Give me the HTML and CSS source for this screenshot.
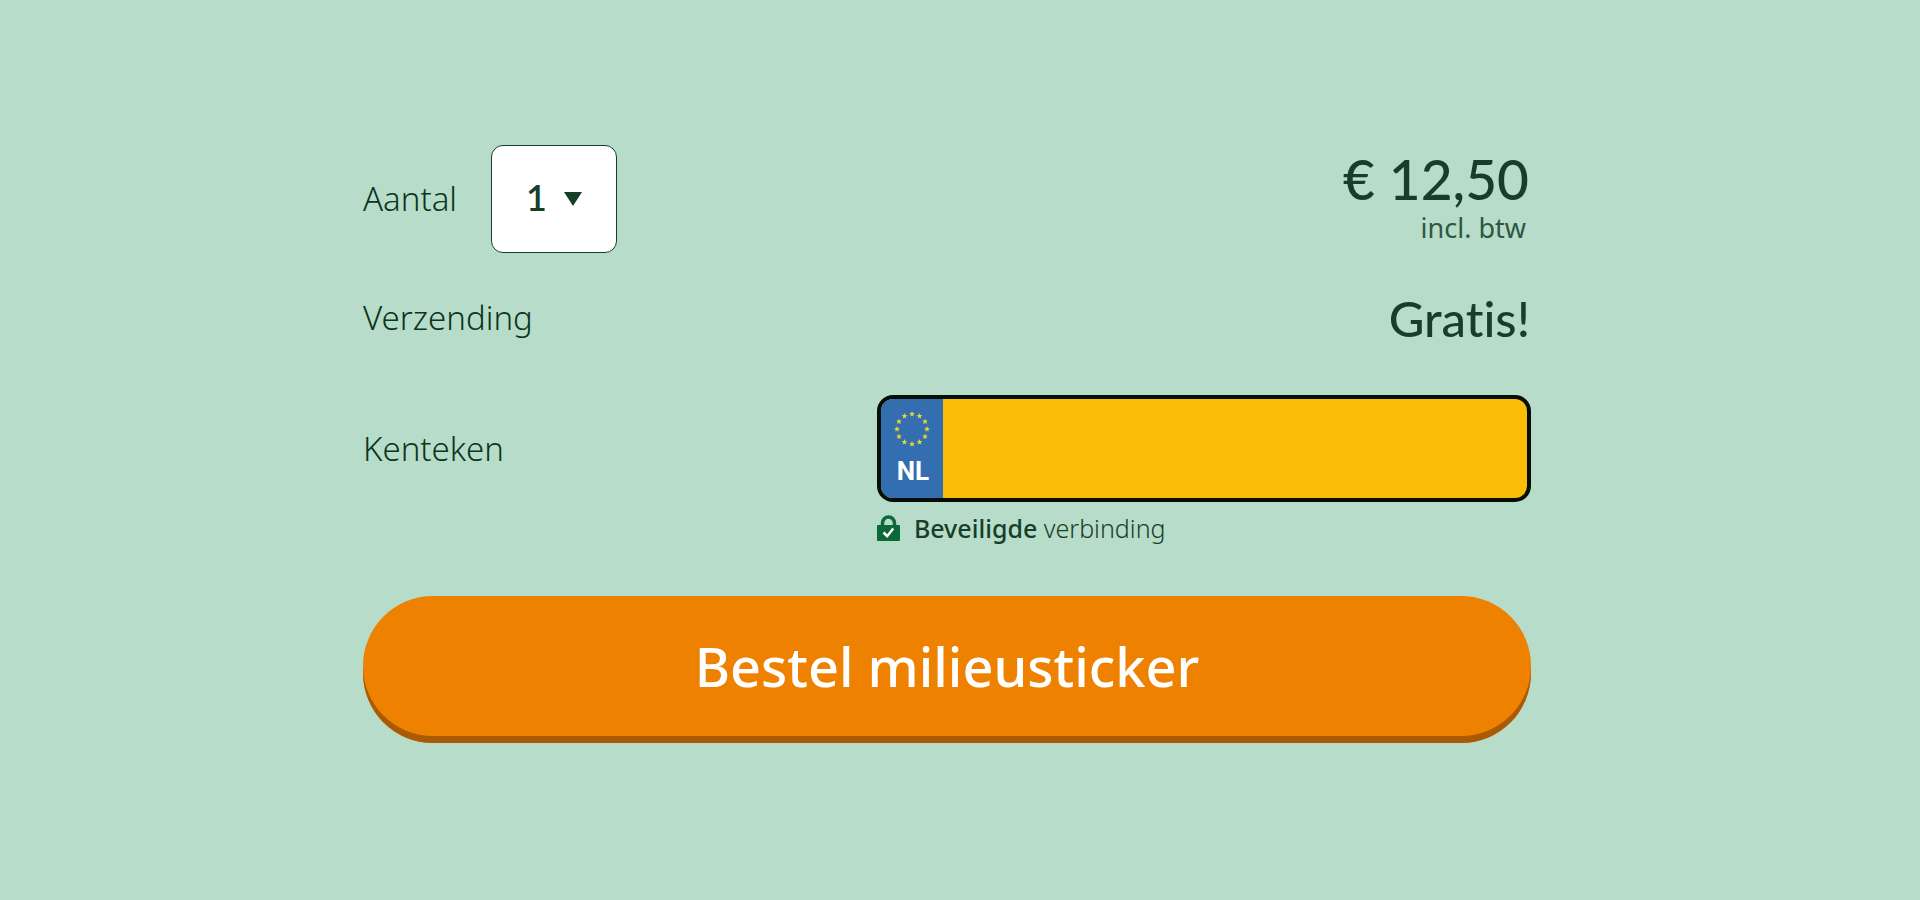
FILE: index.html
```html
<!DOCTYPE html>
<html lang="nl">
<head>
<meta charset="utf-8">
<meta name="viewport" content="width=device-width, initial-scale=1">
<title>Bestel milieusticker</title>
<link rel="stylesheet" href="styles.css">
</head>
<body>
<form class="order">
  <div class="row row-amount">
    <div class="amount">
      <label class="label" for="aantal">Aantal</label>
      <div class="select-box">
        <select class="select" id="aantal">
          <option>1</option><option>2</option><option>3</option><option>4</option>
        </select>
        <svg class="arrow" viewBox="0 0 18 14" aria-hidden="true"><path d="M0 0h18L9 14z"/></svg>
      </div>
    </div>
    <div class="price">
      <strong class="price-value">€ 12,50</strong>
      <span class="price-note">incl. btw</span>
    </div>
  </div>
  <div class="row row-shipping">
    <span class="label">Verzending</span>
    <strong class="free">Gratis!</strong>
  </div>
  <div class="row row-plate">
    <label class="label" for="kenteken">Kenteken</label>
    <div class="plate">
      <div class="country">
        <svg class="stars" viewBox="-18 -18 36 36" aria-hidden="true">
          <defs><path id="star" d="M0-2.9.8-.9 2.8-.9 1.3.5 1.8 2.5 0 1.4-1.8 2.5-1.3.5-2.8-.9-.8-.9z"/></defs>
          <use href="#star" x="0" y="-15"/><use href="#star" x="7.5" y="-13"/><use href="#star" x="13" y="-7.5"/>
          <use href="#star" x="15" y="0"/><use href="#star" x="13" y="7.5"/><use href="#star" x="7.5" y="13"/>
          <use href="#star" x="0" y="15"/><use href="#star" x="-7.5" y="13"/><use href="#star" x="-13" y="7.5"/>
          <use href="#star" x="-15" y="0"/><use href="#star" x="-13" y="-7.5"/><use href="#star" x="-7.5" y="-13"/>
        </svg>
        <span class="code">NL</span>
      </div>
      <input class="plate-input" id="kenteken" type="text">
    </div>
  </div>
  <p class="secure">
    <svg class="lock" viewBox="0 0 23 26" aria-hidden="true">
      <path class="shackle" d="M5.5 12V8a6 6 0 0 1 12 0v4"/>
      <rect class="case" y="10" width="23" height="16" rx="1"/>
      <path class="check" d="M6.5 17.5l3.7 3.7 6-7.7"/>
    </svg>
    <span><b class="secure-strong">Beveiligde</b> verbinding</span>
  </p>
  <button class="submit" type="submit">Bestel milieusticker</button>
</form>
</body>
</html>
```
FILE: styles.css
```css
* { box-sizing: border-box; }
body {
  margin: 0;
  padding: 145px 50px 48px 24px;
  background: #b7dcca;
  color: #163f29;
  font-family: "Noto Sans", sans-serif;
  font-size: 33px;
  line-height: 40px;
}
.order { max-width: 1168px; margin: 0 auto; }
.row { display: flex; align-items: center; justify-content: space-between; }
.label { font-weight: 300; color: #0c3520; }
.amount { display: flex; align-items: center; gap: 34px; }
.select-box { position: relative; }
.select {
  appearance: none;
  display: block;
  width: 126px;
  height: 108px;
  padding: 0 0 4px 34px;
  border: 1px solid #163f29;
  border-radius: 12px;
  background: #fff;
  color: inherit;
  font: 600 36px Lato, sans-serif;
}
.arrow {
  position: absolute;
  top: 47px;
  right: 35px;
  width: 18px;
  height: 14px;
  fill: #163f29;
  pointer-events: none;
}
.price { display: flex; flex-direction: column; align-items: flex-end; padding: 0 2px 4px 0; }
.price-value { font-family: Lato, sans-serif; font-size: 55px; font-weight: 500; line-height: 62px; }
.price-note { font-size: 27px; font-weight: 400; line-height: 36px; padding-right: 3px; color: #2d5743; }
.row-shipping { margin-top: 37px; height: 56px; }
.free { font-family: Lato, sans-serif; font-variant-ligatures: none; font-size: 49px; font-weight: 500; line-height: 56px; padding-right: 1px; }
.row-plate { margin-top: 49px; }
.plate {
  display: flex;
  width: 56%;
  height: 107px;
  border: 4px solid #050f08;
  border-radius: 16px;
  overflow: hidden;
  background: #fabd05;
}
.country {
  display: flex;
  flex-direction: column;
  align-items: center;
  flex: 0 0 62px;
  padding-top: 12px;
  background: #326eb0;
}
.stars { width: 36px; height: 36px; fill: #e8d13c; }
.code {
  margin-top: 8px;
  padding-left: 2px;
  color: #fff;
  font: 700 26px/32px Roboto, sans-serif;
}
.plate-input {
  flex: 1;
  min-width: 0;
  padding: 0 24px;
  border: 0;
  outline: 0;
  background: transparent;
  color: #050f08;
  font: 700 56px Roboto, sans-serif;
}
.secure {
  display: flex;
  align-items: center;
  gap: 14px;
  width: 56%;
  margin: 6px 0 0 auto;
  font-size: 25px;
  font-weight: 300;
}
.lock { width: 23px; height: 26px; }
.shackle { fill: none; stroke: #0d6838; stroke-width: 3.5; }
.case { fill: #0d6838; }
.check { fill: none; stroke: #fff; stroke-width: 2.5; }
.secure-strong { font-weight: 500; }
.submit {
  display: block;
  width: 100%;
  height: 147px;
  margin-top: 48px;
  padding: 0 0 8px;
  border: 0;
  border-radius: 70px;
  background: #ee8100;
  box-shadow: inset 0 -7px #a85b04;
  color: #fff;
  font: 500 54px "Noto Sans", sans-serif;
}
```
